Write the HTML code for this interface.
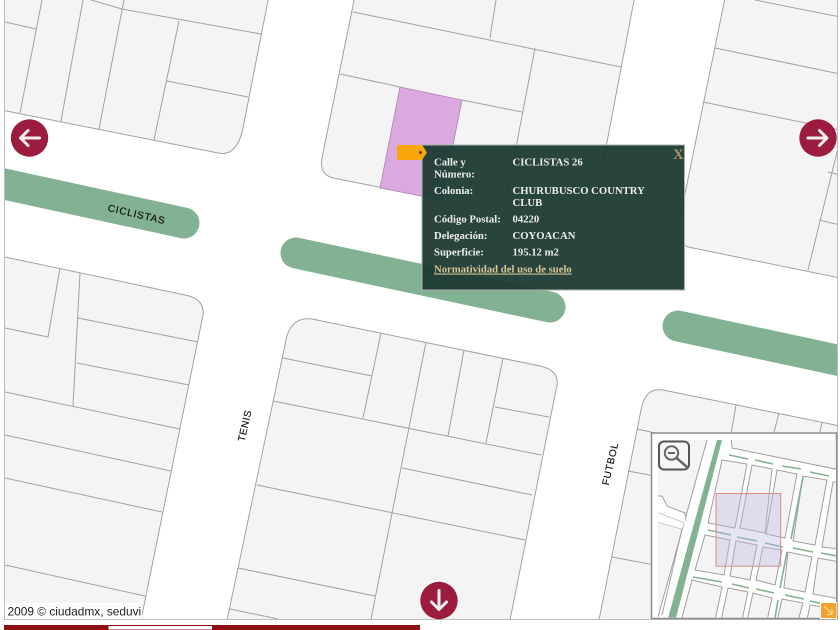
<!DOCTYPE html>
<html><head><meta charset="utf-8"><title>Mapa</title>
<style>
html,body{margin:0;padding:0;background:#fff;width:840px;height:630px;overflow:hidden}
svg{display:block;filter:blur(.3px)}
.b{fill:#f4f4f4;stroke:#a2a2a2;stroke-width:1}
.l{fill:none;stroke:#a2a2a2;stroke-width:1}
.r{fill:none;stroke:#82b292;stroke-width:31;stroke-linecap:round}
.s{font-family:"Liberation Sans",sans-serif;fill:#111}
.t{font-family:"Liberation Serif",serif;font-weight:bold;font-size:10.700px;fill:#ededed}
.mb{fill:#f4f4f4;stroke:#a0a0a0;stroke-width:1}
.ml{fill:none;stroke:#a0a0a0;stroke-width:1}
.mg{fill:none;stroke:#82b292;stroke-width:1.600}
</style></head><body>
<svg width="840" height="630" viewBox="0 0 840 630" xmlns="http://www.w3.org/2000/svg">
<defs>
<clipPath id="m"><rect x="5" y="0" width="832" height="619"/></clipPath>
<clipPath id="mm"><rect x="658" y="440" width="178" height="177.500"/></clipPath>
</defs>
<rect width="840" height="630" fill="#fff"/>
<g clip-path="url(#m)">
<!-- blocks -->
<path class="b" d="M-2,-2H268.500L243,128Q237,157 218,153L5,110.700L-2,109Z"/>
<path class="b" d="M354.500,-2L322,158Q319,174 333,178L575,226Q590,229 594,210L634.500,-2Z"/>
<path class="b" d="M725,-2L678,228Q675,241 688,247L845,279V-2Z"/>
<path class="b" d="M-2,255.500L185,295Q205,299 203,315L140,625H-2Z"/>
<path class="b" d="M312,319L540,366Q559,370 557,385L509,625H226L285,345Q289,316 312,319Z"/>
<path class="b" d="M663,390L845,427V625H598L641,410Q645,387 663,390Z"/>
<!-- purple lot -->
<path d="M400,87L462,100L442,200L380,188Z" fill="#dba8df" stroke="#a887a8" stroke-width=".8"/>
<!-- block A -->
<path class="l" d="M20,113L42,0M61,121L83,0M99,129L124,0M154,140L179,21M91,0L122,9L261,34M167,81L248,97M5,22L36,29"/>
<!-- block B -->
<path class="l" d="M353,12L621,67M496,0L490,38M535,48L505,205M340,74L400,87M462,100L522,112"/>
<!-- block C -->
<path class="l" d="M755,0L840,17M715,48L840,74M703,102L840,130M840,140L808,270M828,172L840,175M819,220L840,225"/>
<!-- block D -->
<path class="l" d="M60,268L48,337L5,328M80,273L73,406M78,318L198,342M77,363L189,385M5,392L180,429M5,435L171,471M5,478L162,512M5,565L145,596"/>
<!-- block E -->
<path class="l" d="M283,358L372,376M381,333L363,418M273,401L541,455M426,342L371,619M464,350L448,436M503,358L486,443M495,407L549,417M402,468L532,495M257,485L525,540M238,568L375,596M230,609L278,619"/>
<!-- block F -->
<path class="l" d="M637,429L660,434M628,471L660,477M612,557L660,566M736,405L730,440M779,413L772,440M822,423L818,440"/>
<!-- green strips -->
<path class="r" d="M-10,181L184,223"/>
<path class="r" d="M296,253L550,307"/>
<path class="r" d="M678,326L860,365"/>
</g>
<text class="s" font-size="10" letter-spacing=".9" stroke="#111" stroke-width=".2" text-anchor="middle" transform="translate(136,217.500) rotate(13)">CICLISTAS</text>
<text class="s" font-size="10" letter-spacing=".5" stroke="#111" stroke-width=".15" text-anchor="middle" transform="translate(248,426.500) rotate(-77)">TENIS</text>
<text class="s" font-size="10" letter-spacing=".7" stroke="#111" stroke-width=".15" text-anchor="middle" transform="translate(613.500,464.500) rotate(-77)">FUTBOL</text>
<!-- copyright -->
<rect x="5" y="603" width="137" height="16" fill="#fff" opacity=".85"/>
<text x="7.500" y="615.500" font-family="'Liberation Sans',sans-serif" font-size="11.900" fill="#222">2009 © ciudadmx, seduvi</text>
<!-- frame -->
<path d="M4.500,0V619.500H837.500V0" fill="none" stroke="#bdbdbd" stroke-width="1"/>
<!-- bottom bar -->
<rect x="4" y="625" width="416" height="5" fill="#8e1016"/>
<rect x="108.500" y="626" width="103.500" height="3.500" fill="#fff"/>
<!-- arrows -->
<g>
<circle cx="29.500" cy="138" r="18.700" fill="#9b1c3f"/>
<path d="M39.500,138H21.500M28,130.500L20.500,138L28,145.500" fill="none" stroke="#f4eef0" stroke-width="3" stroke-linecap="round" stroke-linejoin="round"/>
<circle cx="818" cy="138" r="18.700" fill="#9b1c3f"/>
<path d="M808,138H826M819.500,130.500L827,138L819.500,145.500" fill="none" stroke="#f4eef0" stroke-width="3" stroke-linecap="round" stroke-linejoin="round"/>
<circle cx="439" cy="600.500" r="18.700" fill="#9b1c3f"/>
<path d="M439,590.500V608.500M431.500,602L439,609.500L446.500,602" fill="none" stroke="#f4eef0" stroke-width="3" stroke-linecap="round" stroke-linejoin="round"/>
</g>
<!-- info panel -->
<rect x="422" y="145" width="262.500" height="145" fill="rgb(28,58,51)" fill-opacity=".95" stroke="#a9b2af" stroke-width="1"/>
<path d="M397,145H422L427,152.500L422,160H397Z" fill="#f9a60a"/>
<circle cx="420.500" cy="152.500" r="1.500" fill="#5a3d10"/>
<text x="673" y="159" font-family="'Liberation Serif',serif" font-weight="bold" font-size="15" fill="#a8955f">X</text>
<text class="t" x="434" y="165.500">Calle y</text>
<text class="t" x="434" y="177.500">Número:</text>
<text class="t" x="512.500" y="165.500">CICLISTAS 26</text>
<text class="t" x="434" y="194">Colonia:</text>
<text class="t" x="512.500" y="194">CHURUBUSCO COUNTRY</text>
<text class="t" x="512.500" y="206">CLUB</text>
<text class="t" x="434" y="222.500">Código Postal:</text>
<text class="t" x="512.500" y="222.500">04220</text>
<text class="t" x="434" y="239">Delegación:</text>
<text class="t" x="512.500" y="239">COYOACAN</text>
<text class="t" x="434" y="255.500">Superficie:</text>
<text class="t" x="512.500" y="255.500">195.12 m2</text>
<text class="t" x="434" y="272.500" style="fill:#d9c596;text-decoration:underline">Normatividad del uso de suelo</text>
<!-- minimap -->
<rect x="651.500" y="433" width="185" height="185.500" fill="#fff" stroke="#8c8c8c" stroke-width="1.500"/>
<g clip-path="url(#mm)">
<rect x="658" y="440" width="178" height="178" fill="#f4f4f4"/>
<!-- white streets base -->
<path d="M708,440H731L683,618H658Z" fill="#fff"/>
<path d="M731,440H840V620H683Z" fill="#fff"/>
<path class="mb" d="M731,436L732,448L840,470V436Z"/>
<!-- left side -->
<path class="ml" d="M707,440L658,617"/>
<path d="M658,496H662L667,506L685,513L686,521L684,523L658,513Z" fill="#fff"/>
<path class="ml" d="M658,496L662,496L667,506L685,513L686,521M658,513L684,523M658,522L682,529L662,615"/>
<path d="M658,513L684,523L682,529L658,522Z" fill="#fff"/>
<!-- blocks -->
<path class="mb" d="M722,460L747,464L735,528L708,523Z"/>
<path class="mb" d="M752,465L772,469L765,533L740,528Z"/>
<path class="mb" d="M777,470L797,474L785,538L766,534Z"/>
<path class="mb" d="M803,476L827,480L815,545L793,541Z"/>
<path class="mb" d="M833,482L840,482L840,549L822,547Z"/>
<path class="mb" d="M705,535L730,540L724,575L695,570Z"/>
<path class="mb" d="M736,541L757,545L750,580L730,576Z"/>
<path class="mb" d="M763,547L782,550L775,585L756,580Z"/>
<path class="mb" d="M788,552L812,557L805,592L784,588Z"/>
<path class="mb" d="M818,558L840,562L840,599L813,594Z"/>
<path class="mb" d="M692,580L722,587L714,625L680,625Z"/>
<path class="mb" d="M728,588L748,592L741,625L720,625Z"/>
<path class="mb" d="M753,593L772,598L766,625L746,625Z"/>
<path class="mb" d="M782,599L803,603L797,625L776,625Z"/>
<path class="mb" d="M810,605L830,608L828,625L806,625Z"/>
<!-- green diagonal -->
<path d="M717,440H722L676,618H668Z" fill="#82b292"/>
<!-- green dashes -->
<path class="mg" d="M729,455L748,459M755,460L773,464M782,466L801,469M810,472L829,476M708,530L731,535M737,537L757,541M765,543L783,547M793,548L813,552M821,553L837,556M693,577L722,582M732,584L749,588M756,589L774,593M785,595L804,599M810,601L828,605M803,477L791,539M787,552L780,588M778,600L775,618"/>
<!-- selection -->
<rect x="716" y="493.500" width="64.700" height="72.700" fill="#b8b8dc" fill-opacity=".38" stroke="#e08a8a" stroke-width="1"/>
</g>
<!-- zoom icon -->
<rect x="659" y="441.500" width="30" height="28" rx="5" fill="#f6f6f6" fill-opacity=".8" stroke="#555" stroke-width="2"/>
<circle cx="671.500" cy="453" r="6.700" fill="none" stroke="#666" stroke-width="2"/>
<path d="M668,453H675" stroke="#666" stroke-width="2"/>
<path d="M676.500,458L687,467" stroke="#666" stroke-width="2.500" stroke-linecap="round"/>
<!-- expand corner -->
<rect x="820" y="602" width="17" height="17" fill="#fff"/>
<rect x="821" y="603" width="15.500" height="15" fill="#f2a22a"/>
<path d="M824,606L832,614M832,609V614.500H826.500" fill="none" stroke="#fbd88f" stroke-width="1.300"/>
</svg>
</body></html>
